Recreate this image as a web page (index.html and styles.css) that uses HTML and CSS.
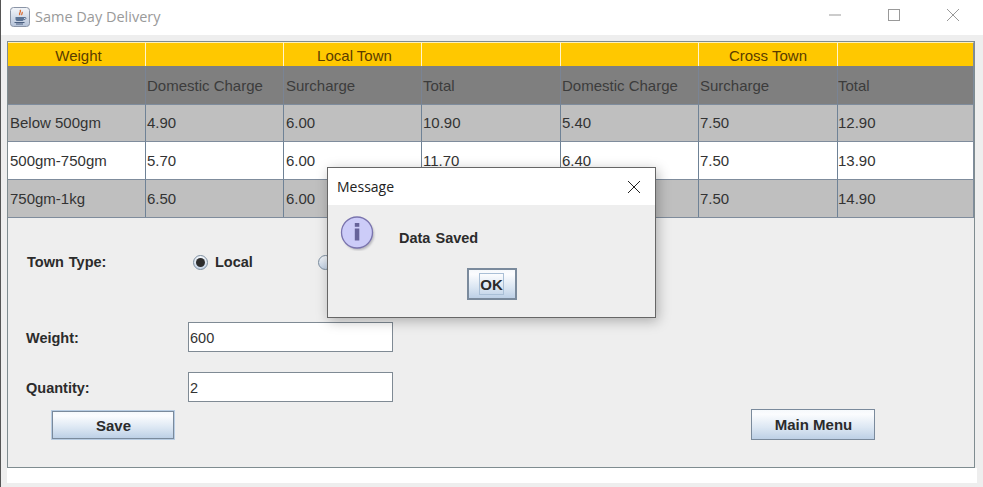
FILE: index.html
```html
<!DOCTYPE html>
<html lang="en">
<head>
<meta charset="utf-8">
<title>Same Day Delivery</title>
<link rel="stylesheet" href="styles.css">
</head>
<body>
<div class="window">
  <header class="titlebar">
    <svg class="app-icon" width="20" height="20" viewBox="0 0 20 20">
      <defs><linearGradient id="tile" x1="0" y1="0" x2="0" y2="1"><stop offset="0" stop-color="#f4f6fa"/><stop offset="1" stop-color="#b4c2d8"/></linearGradient></defs>
      <rect x="0.5" y="0.5" width="19" height="19" rx="3" fill="url(#tile)" stroke="#8a94a6"/>
      <path d="M10 3c2 2-2 3 0 5M12 5c1 1-1 2 0 3" fill="none" stroke="#d9662a" stroke-width="1.3"/>
      <path d="M5.5 10h8.500v2c0 1.500-1.500 2-2 2h-4.500c-1 0-2-.6-2-2z" fill="#5c7394"/>
      <path d="M14 10.500h1.500c.8 0 .8 2-1.500 2.200" fill="none" stroke="#5c7394"/>
      <path d="M4.500 15.500h10M6 17h7" stroke="#4a5f80" stroke-width="1"/>
    </svg>
    <span class="title">Same Day Delivery</span>
    <div class="controls">
      <svg width="12" height="12" viewBox="0 0 12 12"><path d="M0 6h12" stroke="#999"/></svg>
      <svg width="12" height="12" viewBox="0 0 12 12"><rect x="0.500" y="0.500" width="11" height="11" fill="none" stroke="#999"/></svg>
      <svg width="12" height="12" viewBox="0 0 12 12"><path d="M0 0l12 12M12 0L0 12" stroke="#999"/></svg>
    </div>
  </header>

  <main class="body">
    <section class="panel">
      <div class="grid">
        <div class="cell head center">Weight</div>
        <div class="cell head"></div>
        <div class="cell head center">Local Town</div>
        <div class="cell head"></div>
        <div class="cell head"></div>
        <div class="cell head center cross">Cross Town</div>
        <div class="cell head"></div>

        <div class="cell sub"></div>
        <div class="cell sub">Domestic Charge</div>
        <div class="cell sub">Surcharge</div>
        <div class="cell sub">Total</div>
        <div class="cell sub">Domestic Charge</div>
        <div class="cell sub">Surcharge</div>
        <div class="cell sub">Total</div>

        <div class="cell alt">Below 500gm</div>
        <div class="cell alt">4.90</div>
        <div class="cell alt">6.00</div>
        <div class="cell alt">10.90</div>
        <div class="cell alt">5.40</div>
        <div class="cell alt">7.50</div>
        <div class="cell alt">12.90</div>

        <div class="cell plain">500gm-750gm</div>
        <div class="cell plain">5.70</div>
        <div class="cell plain">6.00</div>
        <div class="cell plain">11.70</div>
        <div class="cell plain">6.40</div>
        <div class="cell plain">7.50</div>
        <div class="cell plain">13.90</div>

        <div class="cell alt">750gm-1kg</div>
        <div class="cell alt">6.50</div>
        <div class="cell alt">6.00</div>
        <div class="cell alt">12.50</div>
        <div class="cell alt">6.90</div>
        <div class="cell alt">7.50</div>
        <div class="cell alt">14.90</div>
      </div>

      <div class="form">
        <div class="row-town">
          <span class="label town-label">Town Type:</span>
          <span class="radio-item local">
            <span class="radio on"></span>
            <span class="label">Local</span>
          </span>
          <span class="radio-item">
            <span class="radio"></span>
            <span class="label">Cross</span>
          </span>
        </div>
        <div class="row-field row-weight">
          <span class="label field-label">Weight:</span>
          <div class="input">600</div>
        </div>
        <div class="row-field row-qty">
          <span class="label field-label">Quantity:</span>
          <div class="input">2</div>
        </div>
        <div class="row-buttons">
          <button class="btn save">Save</button>
          <button class="btn menu">Main Menu</button>
        </div>
      </div>
    </section>
    <div class="strip"></div>
  </main>
</div>

<div class="dialog">
  <div class="dialog-title">
    <span>Message</span>
    <svg width="12" height="12" viewBox="0 0 12 12"><path d="M0 0l12 12M12 0L0 12" stroke="#222"/></svg>
  </div>
  <div class="dialog-body">
    <div class="dialog-msg">
      <svg class="info" width="36" height="36" viewBox="0 0 36 36">
        <defs><filter id="blur" x="-20%" y="-20%" width="140%" height="140%"><feGaussianBlur stdDeviation="1.200"/></filter></defs>
        <circle cx="18.500" cy="19.500" r="15.500" fill="#8c8c96" opacity="0.600" filter="url(#blur)"/>
        <circle cx="17" cy="17.500" r="15.500" fill="#ccccf8" stroke="#7a74ae" stroke-width="1.300"/>
        <rect x="14.800" y="8" width="4.500" height="3.800" fill="#66639a"/>
        <rect x="14.800" y="13.500" width="4.500" height="12" fill="#66639a"/>
      </svg>
      <span class="label msg-text">Data Saved</span>
    </div>
    <button class="btn ok"><span class="ok-focus">OK</span></button>
  </div>
</div>
</body>
</html>
```
FILE: styles.css
```css
* { box-sizing: border-box; }
html, body { margin: 0; padding: 0; }
body {
  width: 983px;
  height: 487px;
  overflow: hidden;
  position: relative;
  background: #eeeeee;
  font-family: "Liberation Sans", Arial, sans-serif;
  color: #333;
}
.window { display: flex; flex-direction: column; height: 487px; border-left: 1px solid #555; }
.titlebar {
  height: 35px;
  background: #fff;
  display: flex;
  align-items: center;
  padding-left: 9px;
  flex: none;
}
.app-icon { margin-right: 5px; margin-top: -2px; }
.title {
  font-family: "Open Sans", "Noto Sans", sans-serif;
  font-size: 14.500px;
  color: #9a9a9a;
  margin-top: -2px;
}
.controls {
  margin-left: auto;
  margin-right: 24px;
  display: flex;
  gap: 47px;
  margin-top: -5px;
}
.controls svg { display: block; }
.body {
  flex: 1;
  padding: 6px 0 0 6px;
  background: #eee;
}
.panel {
  width: 968px;
  height: 427px;
  background: #eeeeee;
  border: 1px solid #7f8c90;
}
.strip { width: 970px; height: 15px; background: #fff; }
.grid {
  display: grid;
  grid-template-columns: 137px 138px 138px 139px 138px 139px 137px;
  grid-template-rows: 24px 38px 37px 38px 38px;
  font-size: 15px;
  color: #333;
  border-bottom: 1px solid #7f8c9c;
}
.cell {
  display: flex;
  align-items: center;
  padding-left: 1px;
  border-left: 1px solid #6f8296;
  white-space: nowrap;
  overflow: hidden;
}
.cell:nth-child(7n+1) { border-left: none; padding-left: 2px; }
.cell:nth-child(7n+3) { padding-left: 2px; }
.cell:nth-child(7n) { padding-left: 0; border-right: 1px solid #7f8c9c; }
.head {
  background: #ffc800;
  color: #5a3c00;
  border-left-color: #fff4cc;
  border-top: 1px solid #fff0b8;
  padding-top: 2px;
}
.cell.center { justify-content: center; padding-left: 4px; }
.cell.cross { padding-left: 0; }
.sub { background: #7f7f7f; color: #3c3c3c; border-left-color: #7a8494; padding-top: 1px; }
.alt { background: #bfbfbf; color: #333; border-top: 1px solid #7f8c9c; padding-bottom: 1px; }
.plain { background: #fff; color: #333; border-top: 1px solid #7f8c9c; padding-bottom: 1px; }
.label { font-weight: 700; font-size: 14.500px; color: #2b2b2b; }
.form { padding: 0 0 0 18px; }
.row-town { display: flex; align-items: center; height: 18px; margin-top: 35px; }
.town-label { width: 167px; padding-left: 1px; word-spacing: 1px; }
.radio-item { display: inline-flex; align-items: center; gap: 7px; }
.local { width: 125px; }
.radio {
  width: 15px;
  height: 15px;
  border-radius: 50%;
  border: 1px solid #7c8ea0;
  background: linear-gradient(#f4f7fb, #c4d3e6);
  display: flex;
  align-items: center;
  justify-content: center;
  flex: none;
}
.radio.on::after {
  content: "";
  width: 9px;
  height: 9px;
  border-radius: 50%;
  background: #2d2d2d;
}
.row-field { display: flex; align-items: center; height: 30px; }
.row-weight { margin-top: 51px; }
.row-qty { margin-top: 20px; }
.field-label { width: 162px; padding-top: 2px; }
.input {
  width: 205px;
  height: 30px;
  background: #fff;
  border: 1px solid #7f8a94;
  font-size: 14.500px;
  line-height: 30px;
  padding-left: 1px;
  color: #333;
}
.row-buttons {
  display: flex;
  justify-content: space-between;
  align-items: flex-start;
  width: 823px;
  margin: 7px 0 0 26px;
}
.btn {
  font-family: "Liberation Sans", Arial, sans-serif;
  font-weight: 700;
  font-size: 15px;
  color: #2b2b2b;
  border: 1px solid #7a8a9c;
  background: linear-gradient(#f6f9fc 0, #fbfcfe 15%, #dce7f3 60%, #bdd0e6 100%);
  padding: 0;
}
.save {
  width: 122px;
  height: 28px;
  margin-top: 2px;
  box-shadow: 0 0 0 1px #b8cce2;
  padding-left: 1px;
}
.menu { width: 124px; height: 31px; padding-left: 1px; }
.dialog {
  position: absolute;
  left: 327px;
  top: 167px;
  width: 329px;
  height: 151px;
  border: 1px solid #666;
  background: #eeeeee;
  box-shadow: 2px 3px 12px rgba(0, 0, 0, 0.28);
  display: flex;
  flex-direction: column;
}
.dialog-title {
  height: 37px;
  background: #fff;
  display: flex;
  align-items: center;
  justify-content: space-between;
  padding: 0 15px 0 9px;
  font-family: "Open Sans", "Noto Sans", sans-serif;
  font-size: 14px;
  color: #222;
  flex: none;
}
.dialog-body { flex: 1; display: flex; flex-direction: column; align-items: center; }
.dialog-msg { display: flex; align-items: flex-start; align-self: stretch; height: 52px; padding-left: 12px; }
.info { margin-right: 23px; margin-top: 10px; flex: none; }
.msg-text { word-spacing: 1px; margin-top: 25px; }
.ok {
  width: 50px;
  height: 32px;
  margin-top: 11px;
  border: 2px solid #7a8a9c;
  font-size: 15px;
  display: flex;
  align-items: center;
  justify-content: center;
}
.ok-focus { border: 1px solid #a9bfd6; padding: 2px 0 1px; width: 25px; line-height: 17px; }
```
